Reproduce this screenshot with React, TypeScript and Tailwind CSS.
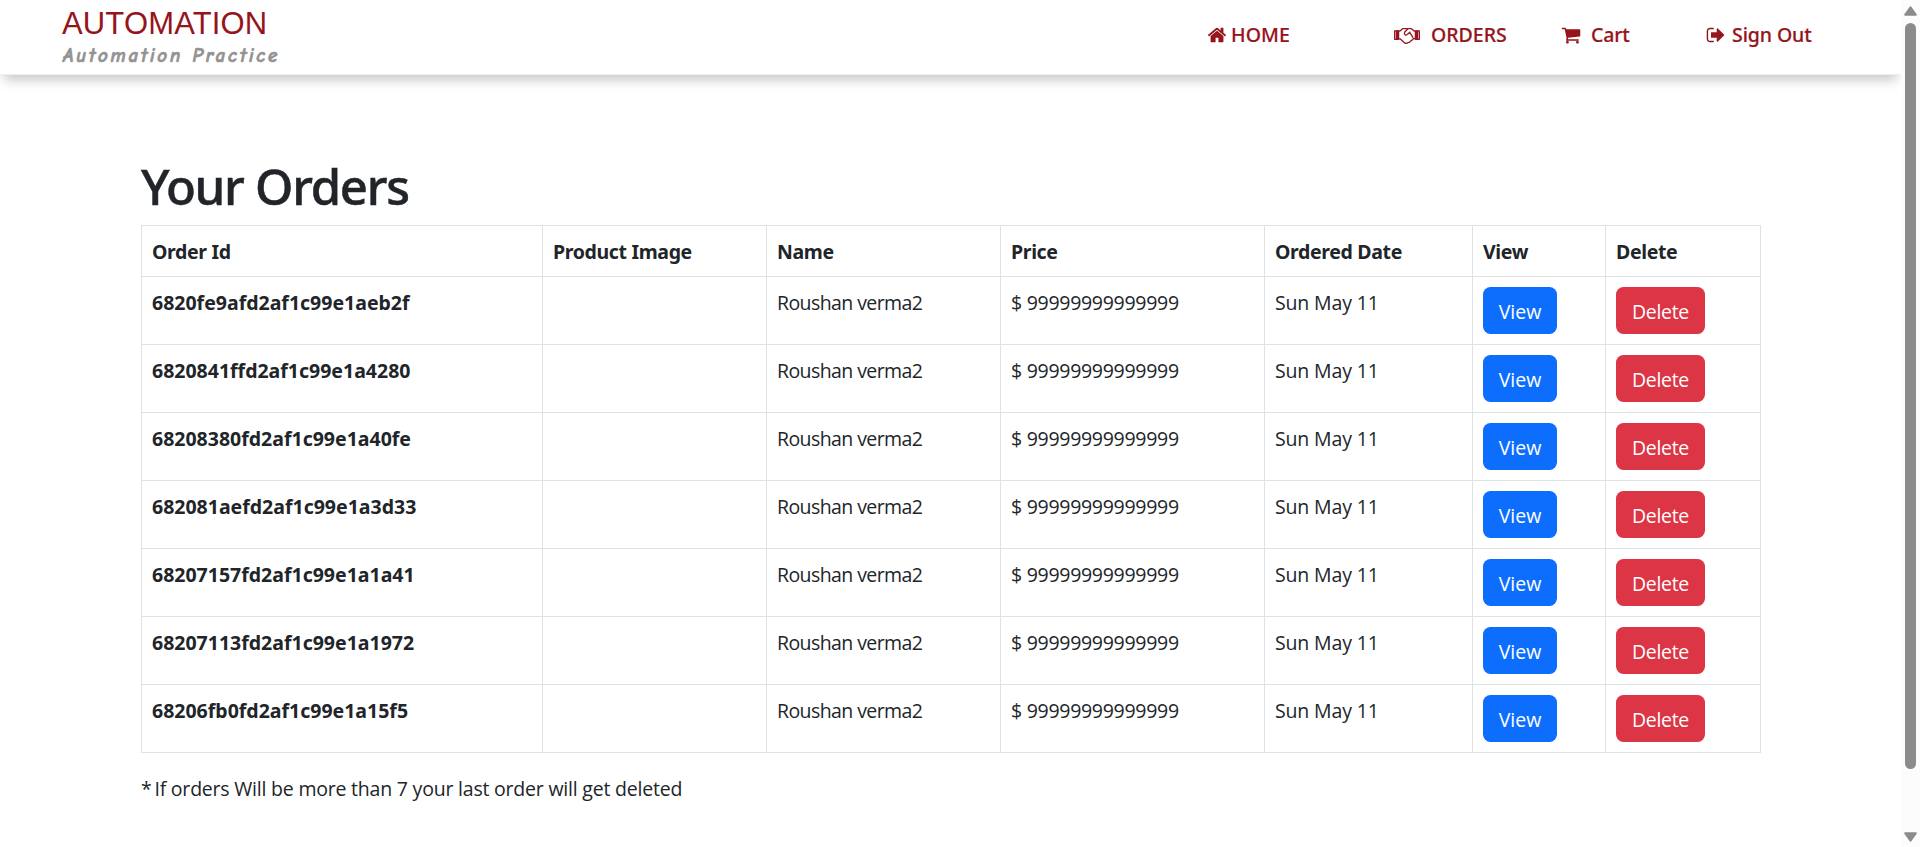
import type { ReactNode } from "react";

const ORDER_IDS = [
  "6820fe9afd2af1c99e1aeb2f",
  "6820841ffd2af1c99e1a4280",
  "68208380fd2af1c99e1a40fe",
  "682081aefd2af1c99e1a3d33",
  "68207157fd2af1c99e1a1a41",
  "68207113fd2af1c99e1a1972",
  "68206fb0fd2af1c99e1a15f5",
];

const COLUMNS = [
  { label: "Order Id", width: "w-[401px]" },
  { label: "Product Image", width: "w-[224px]" },
  { label: "Name", width: "w-[234px]" },
  { label: "Price", width: "w-[264px]" },
  { label: "Ordered Date", width: "w-[208px]" },
  { label: "View", width: "w-[133px]" },
  { label: "Delete", width: "w-[155px]" },
];

function GlyphIcon({ d }: { d: string }) {
  return (
    <svg viewBox="0 0 1792 1792" className="size-5 shrink-0" fill="currentColor">
      <path d={d} />
    </svg>
  );
}

const HOME =
  "M1472 992v480q0 26-19 45t-45 19h-384v-384h-256v384h-384q-26 0-45-19t-19-45v-480q0-1 .5-3t.5-3l575-474 575 474q1 2 1 6zm223-69l-62 74q-8 9-21 11h-3q-13 0-21-7l-692-577-692 577q-12 8-24 7-13-2-21-11l-62-74q-8-10-7-23.5t11-21.5l719-599q32-26 76-26t76 26l244 204v-195q0-14 9-23t23-9h192q14 0 23 9t9 23v408l219 182q10 8 11 21.5t-7 23.5z";
const CART =
  "M704 1536q0 52-38 90t-90 38-90-38-38-90 38-90 90-38 90 38 38 90zm896 0q0 52-38 90t-90 38-90-38-38-90 38-90 90-38 90 38 38 90zm128-1088v512q0 24-16.500 42.500t-40.500 21.500l-1044 122q13 60 13 70 0 16-24 64h920q26 0 45 19t19 45-19 45-45 19h-1024q-26 0-45-19t-19-45q0-11 8-31.500t16-36 21.500-40 15.500-29.500l-177-823h-204q-26 0-45-19t-19-45 19-45 45-19h256q16 0 28.500 6.500t19.500 15.500 13 24.500 8 26 5.500 29.500 4.500 26h1201q26 0 45 19t19 45z";
const SIGN_OUT =
  "M704 1440q0 4 1 20t.5 26.500-3 23.500-10 19.500-20.500 6.500h-320q-119 0-203.500-84.500t-84.500-203.500v-704q0-119 84.500-203.500t203.500-84.500h320q13 0 22.500 9.500t9.500 22.500q0 4 1 20t.5 26.500-3 23.500-10 19.500-20.500 6.500h-320q-66 0-113 47t-47 113v704q0 66 47 113t113 47h312l11.500 1 11.500 3 8 5.500 7 9 2 13.500zm928-544q0 26-19 45l-544 544q-19 19-45 19t-45-19-19-45v-288h-448q-26 0-45-19t-19-45v-384q0-26 19-45t45-19h448v-288q0-26 19-45t45-19 45 19l544 544q19 19 19 45z";

function Handshake() {
  return (
    <svg viewBox="0 0 26 20" className="h-5 w-[26px] shrink-0" fill="none" stroke="currentColor" strokeWidth="1.3" strokeLinejoin="round">
      <path d="M.6 5.900H4.600V14.300H.6Z" />
      <path d="M25.400 5.900H21.400V14.300H25.400Z" />
      <path d="M3 5.500V14.500M23 5.500V14.500" strokeWidth="2.600" />
      <path d="M4.600 6H6L8.600 3.700H17.400L20.200 6H21.400M4.600 13.800H6L10.200 17.600Q12.200 19 14 17.700L15.600 17.100L17 15.700L18.400 14.900L19.400 13.700H21.400" />
      <path d="M13.600 4L10.600 7.200Q9.900 9 11.200 9.900Q12.600 10.400 13.600 9.200L15.700 7.300L19.200 12.800" />
    </svg>
  );
}

function NavLink({ icon, children, className }: { icon: ReactNode; children: ReactNode; className: string }) {
  return (
    <a className={`flex items-center whitespace-nowrap ${className}`}>
      {icon}
      <span className="leading-[30px]">{children}</span>
    </a>
  );
}

function Header() {
  return (
    <header className="flex h-[75px] w-full border-b border-[#eeeeee] bg-white text-[#96151d] shadow-[0_9px_11px_-4px_rgba(0,0,0,0.22)]">
      <div className="w-[1144px] shrink-0 pl-[62px]">
        <p className="pt-1.5 font-['Liberation_Sans',Arial,sans-serif] text-[31px] leading-9 tracking-[0.15px]">AUTOMATION</p>
        <p className="pl-px font-['Comic_Neue','Comic_Sans_MS',cursive] text-[19px] leading-7 font-bold tracking-[2.750px] text-[#929292] italic [-webkit-text-stroke:0.7px_#929292]">
          Automation Practice
        </p>
      </div>
      <nav className="mt-5 flex h-[30px] font-medium [-webkit-text-stroke:0.2px_#96151d]">
        <NavLink className="w-[187px] gap-1 pl-[63px] tracking-[0.1px]" icon={<GlyphIcon d={HOME} />}>HOME</NavLink>
        <NavLink className="w-[230px] gap-[11px] pl-[63px]" icon={<Handshake />}>ORDERS</NavLink>
        <NavLink className="w-[145px] gap-[10px]" icon={<GlyphIcon d={CART} />}>
          <span className="tracking-[-0.2px]">Cart</span>
        </NavLink>
        <NavLink className="gap-[6px] tracking-[-0.1px]" icon={<GlyphIcon d={SIGN_OUT} />}>Sign Out</NavLink>
      </nav>
    </header>
  );
}

function Scrollbar() {
  return (
    <aside className="flex h-full w-[19px] shrink-0 flex-col items-center bg-[#fcfcfc] pt-1.5 pb-[5px] text-[#8b8b8b]">
      <svg viewBox="0 0 13 10" className="h-2.5 w-[13px]" fill="currentColor">
        <path d="M6.500.3Q7 .3 7.500 1L12.700 8.300Q13 9.700 12 9.700H1Q0 9.700.3 8.300L5.500 1Q6 .3 6.500.3Z" />
      </svg>
      <div className="mt-[7px] h-[746px] w-[11px] rounded-full bg-[#8b8b8b]" />
      <svg viewBox="0 0 13 10" className="mt-auto h-2.5 w-[13px]" fill="currentColor">
        <path d="M6.500 9.700Q7 9.700 7.500 9L12.700 1.700Q13 .3 12 .3H1Q0 .3.3 1.700L5.500 9Q6 9.700 6.500 9.700Z" />
      </svg>
    </aside>
  );
}

const CELL = "border-t border-l border-[#dee2e6] px-2.5 pt-[11px] text-left align-top";
const TEXT_CELL = `${CELL} font-['Open_Sans','Noto_Sans',sans-serif]`;
const BUTTON = "-mt-px block h-[47px] rounded-[7.500px] pt-0.5 text-center font-['Open_Sans','Noto_Sans',sans-serif] text-white";

export default function App() {
  return (
    <div className="flex h-[847px] w-[1920px] overflow-hidden bg-white font-['Noto_Sans','Open_Sans',sans-serif] text-[19.500px] leading-[30px] text-[#212529]">
      <div className="w-[1901px] shrink-0 overflow-hidden">
        <Header />
        <main className="pt-[81px] pl-[141px]">
          <h1 className="h-[69px] text-[49px] leading-[60px] font-medium tracking-[-1.250px] [-webkit-text-stroke:0.5px_#212529]">Your Orders</h1>
          <table className="w-[1620px] table-fixed border-separate border-spacing-0 border-r border-b border-[#dee2e6]">
            <thead>
              <tr className="h-[51px]">
                {COLUMNS.map((c) => (
                  <th key={c.label} className={`${CELL} ${c.width} tracking-[-0.350px]`}>{c.label}</th>
                ))}
              </tr>
            </thead>
            <tbody>
              {ORDER_IDS.map((id) => (
                <tr key={id} className="h-[68px]">
                  <th className={CELL}>{id}</th>
                  <td className={CELL} />
                  <td className={`${TEXT_CELL} tracking-[-0.580px]`}>Roushan verma2</td>
                  <td className={`${TEXT_CELL} tracking-[-0.280px]`}>$ 99999999999999</td>
                  <td className={`${TEXT_CELL} tracking-[-0.150px]`}>Sun May 11</td>
                  <td className={CELL}>
                    <button className={`${BUTTON} w-[74px] bg-[#0d6efd]`}>View</button>
                  </td>
                  <td className={CELL}>
                    <button className={`${BUTTON} w-[89px] bg-[#dc3545] tracking-[-0.300px]`}>Delete</button>
                  </td>
                </tr>
              ))}
            </tbody>
          </table>
          <p className="mt-[21px] font-['Open_Sans','Noto_Sans',sans-serif] tracking-[-0.210px]">
            <span className="tracking-[-1.200px]">* </span>
            If orders Will be more than 7 your last order will get deleted
          </p>
        </main>
      </div>
      <Scrollbar />
    </div>
  );
}
